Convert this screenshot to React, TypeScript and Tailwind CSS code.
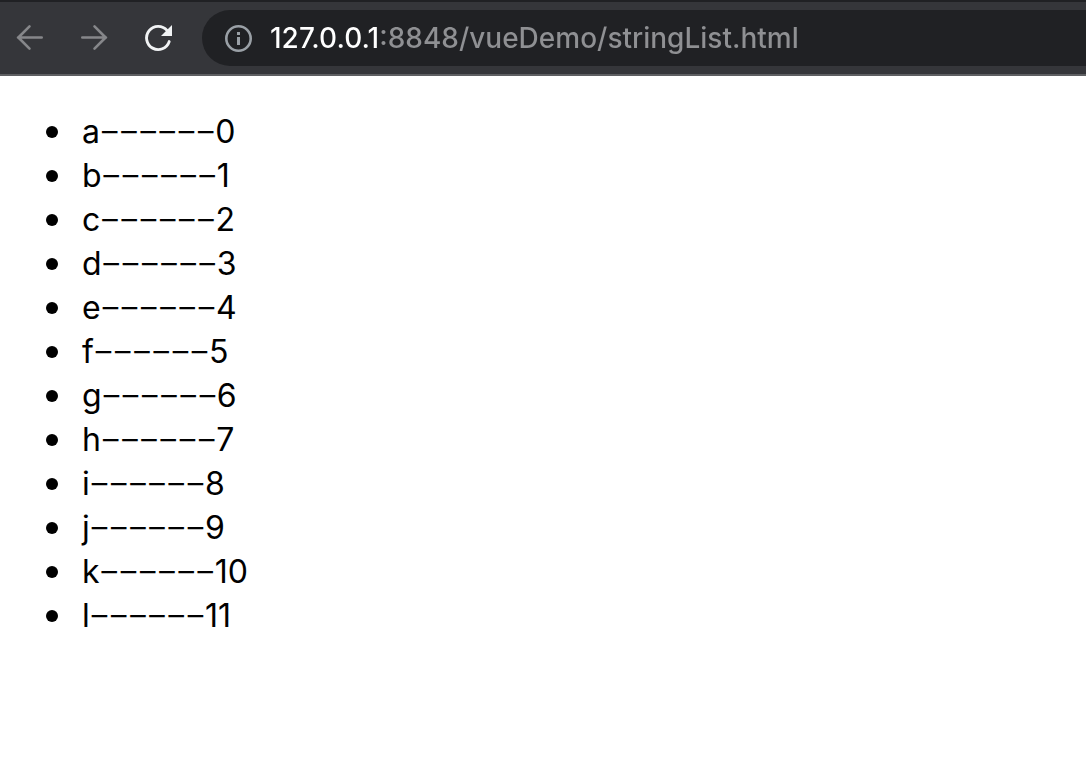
const letters = ['a', 'b', 'c', 'd', 'e', 'f', 'g', 'h', 'i', 'j', 'k', 'l'];

function BackIcon() {
  return (
    <svg className="size-8" viewBox="0 0 32 32" fill="none" stroke="#86878a" strokeWidth="2.6" strokeLinecap="round" strokeLinejoin="round" aria-hidden="true">
      <path d="M27.7 15.5H4M15.5 4.4L4.4 15.5l11.1 11.1" />
    </svg>
  );
}

function ForwardIcon() {
  return (
    <svg className="size-8" viewBox="0 0 32 32" fill="none" stroke="#86878a" strokeWidth="2.6" strokeLinecap="round" strokeLinejoin="round" aria-hidden="true">
      <path d="M4.3 15.5H28M16.5 4.4l11.1 11.1-11.1 11.1" />
    </svg>
  );
}

function ReloadIcon() {
  return (
    <svg className="size-8" viewBox="0 0 32 32" fill="none" aria-hidden="true">
      <path d="M27.2 19.6A11.6 11.6 0 1 1 25 8.4" stroke="#f1f3f4" strokeWidth="2.9" strokeLinecap="round" />
      <path d="M30 3v11H19z" fill="#f1f3f4" />
    </svg>
  );
}

function InfoIcon() {
  return (
    <svg className="size-8" viewBox="0 0 32 32" fill="none" aria-hidden="true">
      <circle cx="16.5" cy="16.5" r="12.2" stroke="#9aa0a6" strokeWidth="2.6" />
      <path d="M15 10h3v3h-3zM15 15h3v8h-3z" fill="#9aa0a6" />
    </svg>
  );
}

export default function App() {
  return (
    <div className="min-h-screen bg-white font-['Inter','Liberation_Sans',sans-serif] text-black">
      <header className="flex items-stretch border-t-2 border-b-2 border-t-[#202124] border-b-[#5e5f62] bg-[#35363a] py-2">
        <nav className="flex items-center gap-8 pr-7 pl-3.5" aria-label="Browser">
          <button type="button" aria-label="Back"><BackIcon /></button>
          <button type="button" aria-label="Forward"><ForwardIcon /></button>
          <button type="button" aria-label="Reload"><ReloadIcon /></button>
        </nav>
        <div className="flex h-14 min-w-0 flex-1 items-center gap-4 rounded-l-full bg-[#202124] pl-5">
          <button type="button" aria-label="Site information"><InfoIcon /></button>
          <input
            type="text"
            aria-label="Address"
            defaultValue="127.0.0.1:8848/vueDemo/stringList.html"
            className="min-w-0 flex-1 bg-[linear-gradient(to_right,#ffffff_110px,#8f9093_110px)] bg-clip-text text-[28px] leading-10 font-medium text-transparent outline-none"
          />
        </div>
      </header>
      <main className="pt-[34px]">
        <ul className="pl-[46px] text-[32px] leading-11">
          {letters.map((letter, index) => (
            <li key={letter} className="flex items-center gap-6 before:size-3 before:rounded-full before:bg-black">
              <span>
                {letter}
                <span className="font-['Liberation_Mono',monospace] leading-none">−−−−−−</span>
                {index}
              </span>
            </li>
          ))}
        </ul>
      </main>
    </div>
  );
}
